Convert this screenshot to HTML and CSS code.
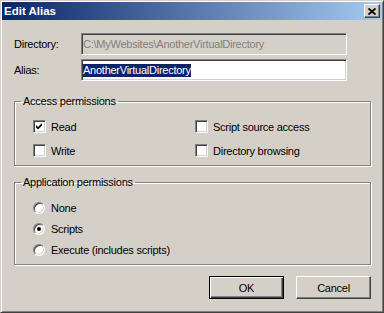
FILE: index.html
```html
<!DOCTYPE html>
<html lang="en">
    <head>
        <meta charset="UTF-8" />
        <title>Edit Alias</title>
        <link rel="stylesheet" href="styles.css">
    </head>

    <body>
        <div class="window">
            <!-- title bar -->
            <div class="titlebar">
                <span class="title">Edit Alias</span>
                <span class="close">
                    <svg width="8" height="7" viewBox="0 0 8 7">
                        <path d="M0.5 0.5 L7.5 6.5 M7.5 0.5 L0.5 6.5" stroke="#000" stroke-width="1.8" fill="none" />
                    </svg>
                </span>
            </div>

            <div class="content">
                <div class="field">
                    <label>Directory:</label>
                    <div class="textbox disabled">C:\MyWebsites\AnotherVirtualDirectory</div>
                </div>
                <div class="field">
                    <label>Alias:</label>
                    <div class="textbox"><span class="sel">AnotherVirtualDirectory</span></div>
                </div>

                <fieldset class="group access">
                    <legend>Access permissions</legend>
                    <div class="opts">
                        <div class="opt">
                            <span class="check">
                                <svg width="7" height="7" viewBox="0 0 7 7">
                                    <path d="M0 2 L2 4 L6 0 L6 2.6 L2 6.6 L0 4.6 Z" fill="#000" />
                                </svg>
                            </span>
                            Read
                        </div>
                        <div class="opt"><span class="check"></span>Script source access</div>
                        <div class="opt"><span class="check"></span>Write</div>
                        <div class="opt"><span class="check"></span>Directory browsing</div>
                    </div>
                </fieldset>

                <fieldset class="group app">
                    <legend>Application permissions</legend>
                    <div class="radios">
                        <div class="opt"><span class="radio"></span>None</div>
                        <div class="opt"><span class="radio on"></span>Scripts</div>
                        <div class="opt"><span class="radio"></span>Execute (includes scripts)</div>
                    </div>
                </fieldset>

                <div class="buttons">
                    <button class="btn default">OK</button>
                    <button class="btn">Cancel</button>
                </div>
            </div>
        </div>
    </body>
</html>
```

FILE: styles.css
```css
* {
    margin: 0;
    padding: 0;
}
html,
body {
    width: 100%;
    height: 100%;
    background: #d4d0c8;
    overflow: hidden;
}
body {
    font-family: "Liberation Sans", Arial, sans-serif;
    font-size: 11px;
    letter-spacing: -0.25px;
    color: #000;
}
.window {
    width: 384px;
    height: 313px;
    box-sizing: border-box;
    background: #d4d0c8;
    border: 1px solid;
    border-color: #d4d0c8 #404040 #404040 #d4d0c8;
    box-shadow: inset 1px 1px #fff, inset -1px -1px #808080;
    padding: 1px 1px 2px 1px;
    display: flex;
    flex-direction: column;
}

/* title bar */
.titlebar {
    height: 18px;
    display: flex;
    align-items: center;
    justify-content: space-between;
    padding: 0 2px 0 2px;
    background: linear-gradient(to right, #0a246a, #a6caf0);
}
.title {
    color: #fff;
    font-weight: bold;
    font-size: 11.5px;
    letter-spacing: 0;
}
.close {
    width: 16px;
    height: 14px;
    box-sizing: border-box;
    display: flex;
    align-items: center;
    justify-content: center;
    background: #d4d0c8;
    border: 1px solid;
    border-color: #fff #404040 #404040 #fff;
    box-shadow: inset -1px -1px #808080;
}

.content {
    padding: 13px 10px 0 12px;
    display: flex;
    flex-direction: column;
}

/* text fields */
.field {
    display: flex;
    align-items: center;
    height: 22px;
}
.field + .field {
    margin-top: 4px;
}
.field label {
    width: 67px;
}
.textbox {
    width: 266px;
    height: 22px;
    box-sizing: border-box;
    display: flex;
    align-items: center;
    padding: 0 1px;
    background: #fff;
    border: 1px solid;
    border-color: #808080 #fff #fff #808080;
    box-shadow: inset 1px 1px #404040, inset -1px -1px #d4d0c8;
    white-space: nowrap;
}
.textbox.disabled {
    background: #d4d0c8;
    color: #808080;
}
.sel {
    background: #0a246a;
    color: #fff;
    line-height: 13px;
}

/* group boxes */
.group {
    border: 1px solid #808080;
    box-shadow: inset 1px 1px #fff, 1px 1px #fff;
    padding: 0 0 8px 18px;
    margin-right: 1px;
}
.group legend {
    margin-left: -12px;
    padding: 0 2px;
    line-height: 13px;
}
.access {
    margin-top: 14px;
    padding-top: 12px;
}
.app {
    margin-top: 10px;
    padding-top: 12px;
}
.opts {
    display: grid;
    grid-template-columns: 162px 1fr;
    row-gap: 11px;
}
.radios {
    display: flex;
    flex-direction: column;
    gap: 8px;
}
.opt {
    display: flex;
    align-items: center;
    gap: 5px;
    height: 13px;
    white-space: nowrap;
}
.check {
    width: 13px;
    height: 13px;
    box-sizing: border-box;
    display: flex;
    align-items: center;
    justify-content: center;
    background: #fff;
    border: 1px solid;
    border-color: #808080 #fff #fff #808080;
    box-shadow: inset 1px 1px #404040, inset -1px -1px #d4d0c8;
}
.radio {
    width: 12px;
    height: 12px;
    box-sizing: border-box;
    border-radius: 50%;
    display: flex;
    align-items: center;
    justify-content: center;
    background: #fff;
    border: 1px solid;
    border-color: #808080 #fff #fff #808080;
    box-shadow: inset 1px 1px #404040, inset -1px -1px #d4d0c8;
    margin-right: 1px;
}
.radio.on::after {
    content: "";
    width: 4px;
    height: 4px;
    border-radius: 50%;
    background: #000;
}

/* buttons */
.buttons {
    display: flex;
    justify-content: flex-end;
    gap: 12px;
    margin-top: 11px;
    margin-right: 1px;
}
.btn {
    width: 75px;
    height: 23px;
    box-sizing: border-box;
    font-family: "Liberation Sans", Arial, sans-serif;
    font-size: 11px;
    letter-spacing: -0.25px;
    color: #000;
    background: #d4d0c8;
    border: 1px solid;
    border-color: #fff #404040 #404040 #fff;
    box-shadow: inset -1px -1px #808080;
}
.btn.default {
    border: 1px solid #000;
    box-shadow: inset 1px 1px #fff, inset -1px -1px #404040, inset -2px -2px #808080;
}
```
